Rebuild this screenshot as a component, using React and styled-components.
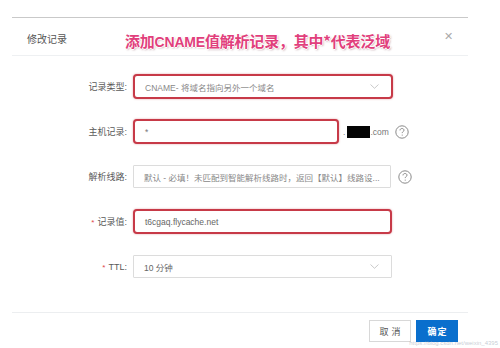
import React from 'react';
import styled, { createGlobalStyle } from 'styled-components';

const GlobalStyle = createGlobalStyle`
  html, body {
    margin: 0;
    padding: 0;
    background: #fff;
  }
  body {
    font-family: "Liberation Sans", "Noto Sans CJK SC", sans-serif;
    color: #555;
  }
`;

const Page = styled.div`
  width: 500px;
  height: 348px;
  overflow: hidden;
  padding-top: 17px;
  box-sizing: border-box;
`;

const Modal = styled.div`
  position: relative;
  width: 456px;
  margin-left: 12px;
  border-top: 1px solid #c9c9c9;
`;

const Header = styled.div`
  height: 37px;
  display: flex;
  align-items: center;
  padding-left: 15px;
  border-bottom: 1px solid #eef0f2;
`;

const Title = styled.div`
  width: 98px;
  font-size: 10px;
  color: #555;
  margin-top: 4px;
`;

const Note = styled.div`
  flex: 1;
  font-family: "Noto Sans CJK SC", sans-serif;
  font-weight: 700;
  font-size: 15px;
  letter-spacing: -0.2px;
  color: #e13f7c;
  margin-top: 8px;
  text-shadow:
    1px 0 0 #fff, -1px 0 0 #fff, 0 1px 0 #fff, 0 -1px 0 #fff,
    1px 1px 2px rgba(90, 20, 40, 0.45);

  b {
    font-family: "Liberation Sans", sans-serif;
    font-weight: 900;
    font-size: 14px;
  }
`;

const Close = styled.div`
  width: 24px;
  font-size: 11px;
  color: #aaa;
  font-family: "DejaVu Sans", sans-serif;
  font-weight: 300;
`;

const Body = styled.div`
  padding: 18px 0 33px;
  display: flex;
  flex-direction: column;
  gap: 20px;
`;

const Row = styled.div`
  display: flex;
  align-items: center;
  height: 25px;
`;

const Label = styled.div`
  width: 118px;
  padding-right: 3px;
  box-sizing: border-box;
  text-align: right;
  font-size: 9px;
  color: #5a5a5a;
  white-space: nowrap;
`;

const Req = styled.span`
  color: #e0474c;
  margin-right: 3px;
  font-size: 8px;
`;

const Field = styled.div`
  width: ${p => p.$w}px;
  height: ${p => (p.$hl ? 25 : 23)}px;
  box-sizing: border-box;
  margin-left: 3px;
  display: flex;
  align-items: center;
  justify-content: space-between;
  padding: 0 12px 0 10px;
  font-size: 8.5px;
  color: ${p => p.$c || '#888'};
  background: #fff;
  border: ${p => (p.$hl ? '2px solid #c73a48' : '1px solid #dcdcdc')};
  border-radius: ${p => (p.$hl ? '4px' : '1px')};
  box-shadow: ${p => (p.$hl ? '0 0 2px rgba(199, 58, 72, 0.5)' : 'none')};
  white-space: nowrap;
  overflow: hidden;
`;

const Suffix = styled.div`
  display: flex;
  align-items: center;
  margin-left: 4px;
  font-size: 8.5px;
  color: #777;
`;

const Redact = styled.span`
  display: inline-block;
  width: 23px;
  height: 12px;
  background: #050505;
  margin-left: 2px;
`;

const Help = styled.div`
  margin-left: ${p => p.$ml}px;
  display: flex;
  align-items: center;
`;

const Footer = styled.div`
  border-top: 1px solid #eceef0;
  padding: 7px 10px 0 0;
  display: flex;
  justify-content: flex-end;
  gap: 5px;
`;

const Button = styled.button`
  width: 42px;
  height: 22px;
  padding: 0;
  font-family: "Noto Sans CJK SC", sans-serif;
  font-size: 9px;
  font-weight: ${p => (p.$primary ? 700 : 400)};
  letter-spacing: ${p => (p.$primary ? '1px' : '3px')};
  text-indent: ${p => (p.$primary ? '1px' : '3px')};
  color: ${p => (p.$primary ? '#fff' : '#555')};
  background: ${p => (p.$primary ? '#0a6fcd' : '#fff')};
  border: 1px solid ${p => (p.$primary ? '#0a6fcd' : '#d8d8d8')};
  border-radius: 0;
`;

const Watermark = styled.div`
  position: absolute;
  right: -30px;
  bottom: -5px;
  font-size: 6px;
  line-height: 7px;
  color: rgba(150, 160, 175, 0.55);
  white-space: nowrap;
`;

const Chevron = () => (
  <svg width="9" height="5" viewBox="0 0 9 5">
    <path d="M0.5 0.5 L4.5 4.3 L8.5 0.5" fill="none" stroke="#c4c4c4" strokeWidth="0.9" />
  </svg>
);

const HelpIcon = () => (
  <svg width="14" height="14" viewBox="0 0 14 14">
    <circle cx="7" cy="7" r="6.2" fill="none" stroke="#8a8a8a" strokeWidth="1" />
    <path d="M5 5.4 C5 4.1 6 3.5 7 3.5 C8.1 3.5 9 4.2 9 5.2 C9 6.4 7.2 6.6 7.2 8.1" fill="none" stroke="#8a8a8a" strokeWidth="1" />
    <circle cx="7.2" cy="10.1" r="0.6" fill="#8a8a8a" />
  </svg>
);

export default function App() {
  return (
    <Page>
      <GlobalStyle />
      <Modal>
        <Header>
          <Title>修改记录</Title>
          <Note>添加<b>CNAME</b>值解析记录，其中*代表泛域</Note>
          <Close>✕</Close>
        </Header>
        <Body>
          <Row>
            <Label>记录类型:</Label>
            <Field $w={260} $hl>
              <span>CNAME- 将域名指向另外一个域名</span>
              <Chevron />
            </Field>
          </Row>
          <Row>
            <Label>主机记录:</Label>
            <Field $w={206} $hl $c="#777">
              <span>*</span>
            </Field>
            <Suffix>
              <span>.</span>
              <Redact />
              <span>.com</span>
            </Suffix>
            <Help $ml={6}><HelpIcon /></Help>
          </Row>
          <Row>
            <Label>解析线路:</Label>
            <Field $w={258}>
              <span>默认 - 必填！未匹配到智能解析线路时，返回【默认】线路设...</span>
              <Chevron />
            </Field>
            <Help $ml={7}><HelpIcon /></Help>
          </Row>
          <Row>
            <Label><Req>*</Req>记录值:</Label>
            <Field $w={259} $hl $c="#666">
              <span>t6cgaq.flycache.net</span>
            </Field>
          </Row>
          <Row>
            <Label><Req>*</Req>TTL:</Label>
            <Field $w={259} $c="#666">
              <span>10 分钟</span>
              <Chevron />
            </Field>
          </Row>
        </Body>
        <Footer>
          <Button>取消</Button>
          <Button $primary>确定</Button>
        </Footer>
        <Watermark>https://blog.csdn.net/weixin_4395</Watermark>
      </Modal>
    </Page>
  );
}
